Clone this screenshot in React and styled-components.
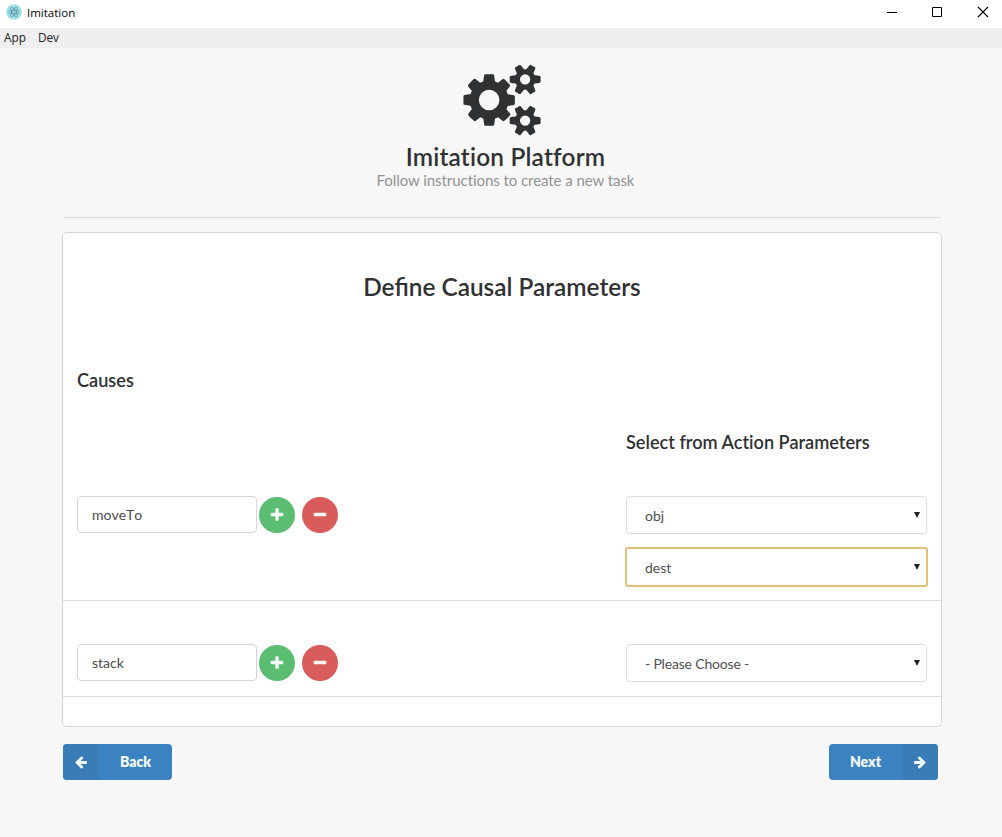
import React from "react";
import styled, { createGlobalStyle } from "styled-components";

const Global = createGlobalStyle`
  *, *::before, *::after { box-sizing: border-box; }
  body { margin: 0; background: #f7f7f7; color: #303132; font: 14px/20px Lato, sans-serif; }
  h1, h2, h3, p { margin: 0; }
  button, input, select { font: inherit; }
`;

const Page = styled.div`
  display: flex;
  flex-direction: column;
  min-height: 837px;
  background: #f7f7f7;
`;

const TitleBar = styled.header`
  display: flex;
  align-items: center;
  height: 28px;
  padding: 0 13px 4px 6px;
  background: #fff;
  color: #000;
  font: 11.5px/24px "Open Sans", sans-serif;
`;

const AppIcon = styled.svg`
  width: 16px;
  height: 16px;
  margin-right: 5px;
`;

const WindowTitle = styled.span`
  flex: 1;
  padding-top: 1px;
`;

const WindowControls = styled.div`
  display: flex;
`;

const ControlGlyph = styled.svg`
  width: 12px;
  height: 12px;
  margin-left: ${(p) => p.$gap || 0}px;
  fill: none;
  stroke: #000;
`;

const MenuBar = styled.nav`
  display: flex;
  gap: 12px;
  height: 20px;
  padding-left: 4px;
  background: #efefef;
  color: #222;
  font: 11.8px/19px "Open Sans", sans-serif;
`;

const Hero = styled.section`
  display: flex;
  flex-direction: column;
  align-items: center;
  height: 170px;
  margin: 0 61px 0 63px;
  padding: 16px 0 0 7px;
  border-bottom: 1px solid #d9dadb;
  font-variant-ligatures: none;
`;

const GearsIcon = styled.svg`
  width: 78px;
  height: 72px;
  margin-right: 7px;
  fill: #303132;
`;

const HeroTitle = styled.h1`
  margin-top: 6px;
  font-size: 24.4px;
  font-weight: 600;
  line-height: 30px;
  letter-spacing: 0.2px;
`;

const HeroSubtitle = styled.p`
  margin-top: -1px;
  color: #929394;
  font-size: 15px;
  line-height: 18px;
  letter-spacing: -0.06px;
`;

const Panel = styled.main`
  height: 495px;
  margin: 14px 60px 0 62px;
  border: 1px solid #d4d4d5;
  border-radius: 5px;
  background: #fff;
`;

const PanelTitle = styled.h2`
  padding-top: 39px;
  text-align: center;
  font-size: 24.4px;
  font-weight: 600;
  line-height: 30px;
`;

const ColumnTitle = styled.h3`
  margin: ${(p) => p.$margin};
  font-size: 18.15px;
  font-weight: 600;
  line-height: 24px;
  font-variant-ligatures: none;
`;

const CauseRow = styled.div`
  display: flex;
  justify-content: space-between;
  align-items: flex-start;
  padding: ${(p) => p.$top}px 14px 14px;
  border-bottom: 1px solid #dededf;
`;

const CauseControls = styled.div`
  display: flex;
  align-items: center;
`;

const CauseInput = styled.input`
  width: 180px;
  height: 37px;
  margin-right: 2px;
  padding: 0 14px;
  border: 1px solid #d4d4d5;
  border-radius: 4px;
  outline: none;
  background: #fff;
  color: #4a4b4c;
  font-size: 14px;
  font-kerning: none;
`;

const CircleButton = styled.button`
  display: flex;
  align-items: center;
  justify-content: center;
  width: 36px;
  height: 36px;
  margin-right: 7px;
  padding: 0;
  border: 0;
  border-radius: 50%;
  background: ${(p) => p.$color};
`;

const Glyph = styled.svg`
  width: ${(p) => p.$size || 16}px;
  height: ${(p) => p.$size || 16}px;
  fill: #fff;
  opacity: 0.93;
`;

const SelectStack = styled.div`
  display: flex;
  flex-direction: column;
  gap: 14px;
  width: 301px;
`;

const SelectBox = styled.div`
  display: flex;
  align-items: center;
  justify-content: space-between;
  height: 38px;
  padding: 1px 6px 0 18px;
  border: 1px solid ${(p) => (p.$focused ? "#e5bf75" : "#dcddde")};
  border-radius: ${(p) => (p.$focused ? 2 : 4)}px;
  box-shadow: ${(p) => (p.$focused ? "0 0 0 1px #e5bf75" : "none")};
  background: #fff;
  color: #4e4f50;
  letter-spacing: ${(p) => p.$spacing || 0}px;
`;

const Caret = styled.svg`
  width: 6px;
  height: 6px;
  margin-bottom: 1px;
  fill: #222;
`;

const Footer = styled.footer`
  display: flex;
  justify-content: space-between;
  margin: 17px 64px 0 63px;
`;

const NavButton = styled.button`
  display: flex;
  flex-direction: ${(p) => (p.$reverse ? "row-reverse" : "row")};
  width: 109px;
  height: 36px;
  padding: 0;
  overflow: hidden;
  border: 0;
  border-radius: 4px;
  background: #3b83c0;
  color: #f3f8fc;
  font-size: 14px;
  font-weight: 800;
  line-height: 36px;
`;

const NavIcon = styled.span`
  display: flex;
  align-items: center;
  justify-content: center;
  width: 36px;
  height: 36px;
  background: #397cb6;
`;

const NavLabel = styled.span`
  flex: 1;
  text-align: center;
`;

const SMALL_GEAR =
  "v140q0 16-149 31-12 27-30 52 51 113 51 138 0 4-4 7-122 71-124 71-8 0-46-47t-52-68q-20 2-30 2t-30-2q-14 21-52 68t-46 47q-2 0-124-71-4-3-4-7 0-25 51-138-18-25-30-52-149-15-149-31v-140q0-16 149-31 13-29 30-52-51-113-51-138 0-4 4-7 4-2 35-20t59-34 30-16q8 0 46 46.5t52 67.5q20-2 30-2t30 2q51-71 92-112l6-2q4 0 124 70 4 3 4 7 0 25-51 138 17 23 30 52 149 15 149 31z";
const COGS =
  "M896 896q0-106-75-181t-181-75-181 75-75 181 75 181 181 75 181-75 75-181zm768 512q0-52-38-90t-90-38-90 38-38 90q0 53 37.5 90.5t90.5 37.5 90.5-37.5 37.5-90.5zm0-1024q0-52-38-90t-90-38-90 38-38 90q0 53 37.5 90.5t90.5 37.5 90.5-37.5 37.5-90.5zm-384 421v185q0 10-7 19.5t-16 10.5l-155 24q-11 35-32 76 34 48 90 115 7 11 7 20 0 12-7 19-23 30-82.5 89.5t-78.5 59.5q-11 0-21-7l-115-90q-37 19-77 31-11 108-23 155-7 24-30 24h-186q-11 0-20-7.5t-10-17.5l-23-153q-34-10-75-31l-118 89q-7 7-20 7-11 0-21-8-144-133-144-160 0-9 7-19 10-14 41-53t47-61q-23-44-35-82l-152-24q-10-1-17-9.5t-7-19.5v-185q0-10 7-19.5t16-10.5l155-24q11-35 32-76-34-48-90-115-7-11-7-20 0-12 7-20 22-30 82-89t79-59q11 0 21 7l115 90q34-18 77-32 11-108 23-154 7-24 30-24h186q11 0 20 7.5t10 17.5l23 153q34 10 75 31l118-89q8-7 20-7 11 0 21 8 144 133 144 160 0 8-7 19-12 16-42 54t-45 60q23 48 34 82l152 23q10 2 17 10.5t7 19.5z" +
  "M1920 1338" + SMALL_GEAR + "M1920 314" + SMALL_GEAR;
const PLUS =
  "M1600 736v192q0 40-28 68t-68 28h-416v416q0 40-28 68t-68 28h-192q-40 0-68-28t-28-68v-416h-416q-40 0-68-28t-28-68v-192q0-40 28-68t68-28h416v-416q0-40 28-68t68-28h192q40 0 68 28t28 68v416h416q40 0 68 28t28 68z";
const MINUS =
  "M1600 736v192q0 40-28 68t-68 28h-1216q-40 0-68-28t-28-68v-192q0-40 28-68t68-28h1216q40 0 68 28t28 68z";
const ARROW_RIGHT =
  "M1600 960q0 54-37 91l-651 651q-39 37-91 37-51 0-90-37l-75-75q-38-38-38-91t38-91l293-293h-704q-52 0-84.5-37.5t-32.5-90.5v-128q0-53 32.5-90.5t84.5-37.5h704l-293-294q-38-36-38-90t38-90l75-75q38-38 90-38 53 0 91 38l651 651q37 35 37 90z";

function Icon({ d, size, flip }) {
  return (
    <Glyph viewBox="0 0 1792 1792" $size={size}>
      <path d={d} transform={flip ? "translate(1792 0) scale(-1 1)" : undefined} />
    </Glyph>
  );
}

function Select({ value, focused, spacing }) {
  return (
    <SelectBox $focused={focused} $spacing={spacing}>
      {value}
      <Caret viewBox="0 0 6 6">
        <path d="M0 0h6L3 6z" />
      </Caret>
    </SelectBox>
  );
}

function Cause({ name, top, params }) {
  return (
    <CauseRow $top={top}>
      <CauseControls>
        <CauseInput defaultValue={name} />
        <CircleButton $color="#5bbd72" aria-label="Add">
          <Icon d={PLUS} />
        </CircleButton>
        <CircleButton $color="#d95c5c" aria-label="Remove">
          <Icon d={MINUS} />
        </CircleButton>
      </CauseControls>
      <SelectStack>
        {params.map((p) => (
          <Select key={p.value} {...p} />
        ))}
      </SelectStack>
    </CauseRow>
  );
}

export default function App() {
  return (
    <Page>
      <Global />
      <TitleBar>
        <AppIcon viewBox="0 0 16 16">
          <circle cx="8" cy="8" r="7.8" fill="#9fe0e8" />
          <g fill="none" stroke="#4d8792" strokeWidth="0.6">
            <ellipse cx="8" cy="8" rx="5.4" ry="2" />
            <ellipse cx="8" cy="8" rx="5.4" ry="2" transform="rotate(60 8 8)" />
            <ellipse cx="8" cy="8" rx="5.4" ry="2" transform="rotate(120 8 8)" />
          </g>
          <circle cx="8" cy="8" r="0.6" fill="#4d8792" />
        </AppIcon>
        <WindowTitle>Imitation</WindowTitle>
        <WindowControls>
          <ControlGlyph viewBox="0 0 12 12">
            <path d="M1 6.5h10" />
          </ControlGlyph>
          <ControlGlyph viewBox="0 0 12 12" $gap={33}>
            <path d="M1.5 1.5h9v9h-9z" />
          </ControlGlyph>
          <ControlGlyph viewBox="0 0 12 12" $gap={34}>
            <path d="M1 1l10 10M11 1L1 11" strokeWidth="1.2" />
          </ControlGlyph>
        </WindowControls>
      </TitleBar>
      <MenuBar>
        <span>App</span>
        <span>Dev</span>
      </MenuBar>
      <Hero>
        <GearsIcon viewBox="0 0 1920 1792">
          <path d={COGS} />
        </GearsIcon>
        <HeroTitle>Imitation Platform</HeroTitle>
        <HeroSubtitle>Follow instructions to create a new task</HeroSubtitle>
      </Hero>
      <Panel>
        <PanelTitle>Define Causal Parameters</PanelTitle>
        <ColumnTitle $margin="66px 0 0 14px">Causes</ColumnTitle>
        <ColumnTitle $margin="38px 0 0 563px">Select from Action Parameters</ColumnTitle>
        <Cause
          name="moveTo"
          top={42}
          params={[{ value: "obj" }, { value: "dest", focused: true }]}
        />
        <Cause
          name="stack"
          top={43}
          params={[{ value: "- Please Choose -", spacing: -0.18 }]}
        />
      </Panel>
      <Footer>
        <NavButton>
          <NavIcon>
            <Icon d={ARROW_RIGHT} size={14} flip />
          </NavIcon>
          <NavLabel>Back</NavLabel>
        </NavButton>
        <NavButton $reverse>
          <NavIcon>
            <Icon d={ARROW_RIGHT} size={14} />
          </NavIcon>
          <NavLabel>Next</NavLabel>
        </NavButton>
      </Footer>
    </Page>
  );
}
